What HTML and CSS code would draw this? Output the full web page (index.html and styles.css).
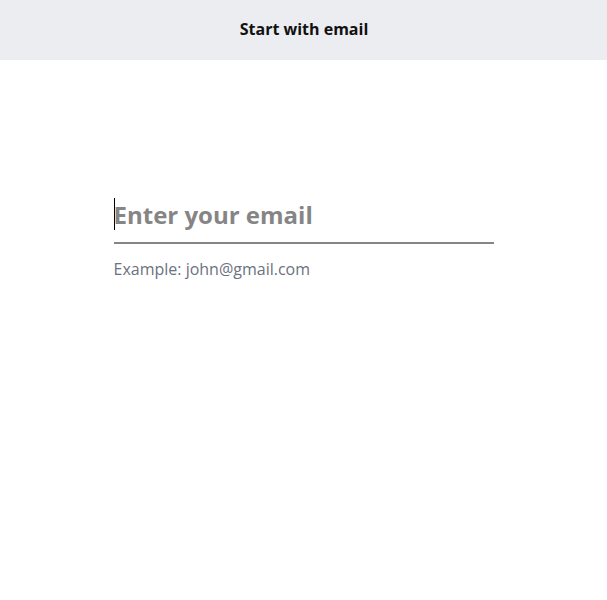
FILE: index.html
```html
<!DOCTYPE html>
<html lang="en">
<head>
<meta charset="utf-8">
<title>Start with email</title>
<link rel="stylesheet" href="styles.css">
</head>
<body>
<header class="topbar">
  <h1 class="title">Start with email</h1>
</header>
<main class="content">
  <form class="email-form">
    <label class="field">
      <input class="email-input" type="email" placeholder="Enter your email" autofocus>
      <span class="caret"></span>
    </label>
    <p class="hint">Example: john@gmail.com</p>
  </form>
</main>
</body>
</html>
```

FILE: styles.css
```css
* { box-sizing: border-box; }
html, body { margin: 0; padding: 0; background: #ffffff; }
body {
  font-family: "Open Sans", "Liberation Sans", sans-serif;
  width: 607px;
  height: 600px;
}
.topbar {
  height: 60px;
  background: #ecedf0;
  display: flex;
  align-items: center;
  justify-content: center;
}
.title {
  margin: 0;
  font-size: 16px;
  font-weight: 700;
  color: #111111;
  line-height: 1;
  padding-bottom: 2px;
  padding-left: 1px;
}
.content {
  display: flex;
  justify-content: center;
  padding-top: 136px;
}
.email-form {
  width: 380px;
  margin: 0;
}
.field {
  display: block;
  position: relative;
}
.email-input {
  display: block;
  width: 100%;
  border: none;
  border-bottom: 2px solid #858585;
  outline: none;
  padding: 0 0 10px 0;
  height: 48px;
  font-family: "Open Sans", "Liberation Sans", sans-serif;
  font-size: 24px;
  font-weight: 700;
  color: #333;
  caret-color: transparent;
  background: transparent;
}
.email-input::placeholder { color: #858585; opacity: 1; }
.caret {
  position: absolute;
  left: 0;
  top: 2px;
  width: 1px;
  height: 32px;
  background: #000;
}
.hint {
  margin: 14px 0 0 0;
  font-size: 16px;
  line-height: 22px;
  color: #6b7280;
}
```
